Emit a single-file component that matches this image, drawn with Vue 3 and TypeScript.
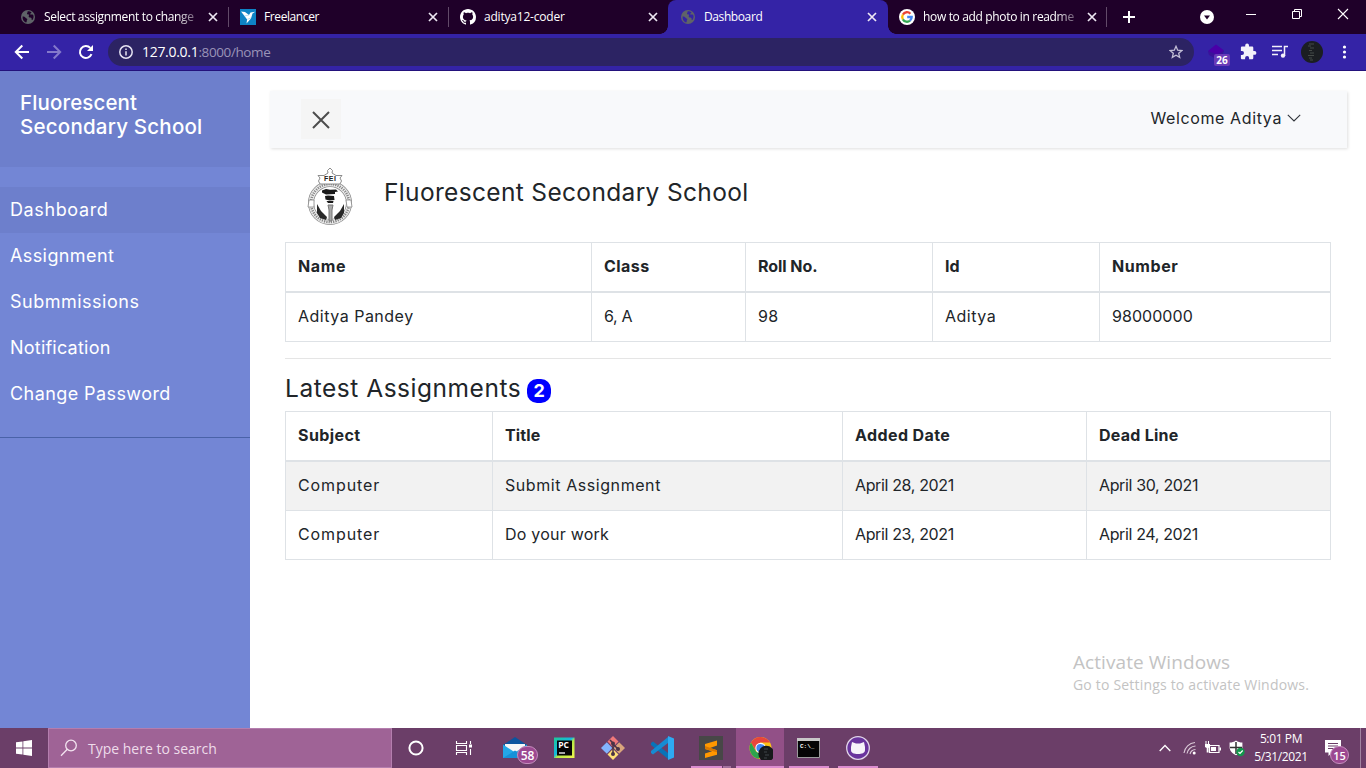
<script setup lang="ts">
interface Tab {
  title: string
  icon: 'globe' | 'bird' | 'github' | 'google'
  active?: boolean
  cls: string
}

const tabs: Tab[] = [
  { title: 'Select assignment to change', icon: 'globe', cls: 't-select' },
  { title: 'Freelancer', icon: 'bird', cls: 't-free' },
  { title: 'aditya12-coder', icon: 'github', cls: 't-git' },
  { title: 'Dashboard', icon: 'globe', active: true, cls: 't-dash' },
  { title: 'how to add photo in readme', icon: 'google', cls: 't-how' },
]

const menu: string[] = ['Dashboard', 'Assignment', 'Submmissions', 'Notification', 'Change Password']

const studentHead: string[] = ['Name', 'Class', 'Roll No.', 'Id', 'Number']
const student: string[] = ['Aditya Pandey', '6, A', '98', 'Aditya', '98000000']

const assignmentHead: string[] = ['Subject', 'Title', 'Added Date', 'Dead Line']
const assignments: string[][] = [
  ['Computer', 'Submit Assignment', 'April 28, 2021', 'April 30, 2021'],
  ['Computer', 'Do your work', 'April 23, 2021', 'April 24, 2021'],
]
</script>

<template>
  <div class="screen">
    <svg class="defs" width="0" height="0">
      <symbol id="cat" viewBox="0 0 16 16">
        <path d="M8 0C3.58 0 0 3.58 0 8c0 3.54 2.29 6.53 5.47 7.59.4.07.55-.17.55-.38 0-.19-.01-.82-.01-1.49-2.01.37-2.53-.49-2.69-.94-.09-.23-.48-.94-.82-1.13-.28-.15-.68-.52-.01-.53.63-.01 1.08.58 1.23.82.72 1.21 1.87.87 2.33.66.07-.52.28-.87.51-1.07-1.78-.2-3.64-.89-3.64-3.95 0-.87.31-1.59.82-2.15-.08-.2-.36-1.02.08-2.12 0 0 .67-.21 2.2.82.64-.18 1.32-.27 2-.27s1.36.09 2 .27c1.53-1.04 2.2-.82 2.2-.82.44 1.1.16 1.92.08 2.12.51.56.82 1.27.82 2.15 0 3.07-1.87 3.75-3.65 3.95.29.25.54.73.54 1.48 0 1.07-.01 1.93-.01 2.2 0 .21.15.46.55.38A8.01 8.01 0 0 0 16 8c0-4.42-3.58-8-8-8z" fill="currentColor" />
      </symbol>
    </svg>

    <header class="tabstrip">
      <div v-for="(t, i) in tabs" :key="i" class="tab" :class="{ active: t.active, sep: i !== 2 && i !== 3 }">
        <svg v-if="t.icon === 'globe'" class="fav" viewBox="0 0 16 16">
          <circle cx="8" cy="8" r="7" fill="#5f6368" />
          <path :fill="t.active ? '#3423a6' : '#1f0029'" d="M2.6 7.6c1.5 0 2.4.4 3 1.2.5.7 1.6.5 1.7 1.4.1.8-.8 1-.6 2 .1.7-.3 1.2-.9 1.3C3.700 12.500 2.300 10.400 2.600 7.600zM7.500 2.400c1.500-.4 3 .1 4 1-.2.700-1 .6-1.300 1.300-.3.8.8 1 1.500.8.9-.2 1.600.3 1.800 1.300.3 1.500-.2 3.300-1.200 4.300-.8-.1-.7-1-.7-1.700 0-.9-1.200-.6-1.900-.9-1-.4-1.300-1.300-.8-2.100.4-.6.3-.9-.4-1-.8 0-1.500-.3-1.500-1 .1-.7.8-.9.5-2z" />
        </svg>
        <svg v-else-if="t.icon === 'bird'" class="fav" viewBox="0 0 16 16">
          <path d="M0 0h16v16H0z" fill="#0e83c5" />
          <path d="M1 2.500l4 .5L9 6l1.500-2.500L15.200 2.800l-2.700 1.700L11 9.500 6.500 14.500l.6-4L4.500 7z" fill="#fff" />
          <path d="M4.500 7l4.500-1M7.300 10.300L11 9" stroke="#8cc7e8" stroke-width=".6" />
        </svg>
        <svg v-else-if="t.icon === 'github'" class="fav white"><use href="#cat" /></svg>
        <svg v-else class="fav" viewBox="0 0 16 16">
          <circle cx="8" cy="8" r="8" fill="#fff" />
          <g fill="none" stroke-width="2.300">
            <path d="M3.900 5.600A4.700 4.700 0 0 1 11.400 4.700" stroke="#ea4335" />
            <path d="M3.900 10.400A4.700 4.700 0 0 1 3.900 5.600" stroke="#fbbc05" />
            <path d="M11 11.600A4.700 4.700 0 0 1 3.900 10.400" stroke="#34a853" />
            <path d="M8.200 8H12.700A4.700 4.700 0 0 1 11 11.600" stroke="#4285f4" />
          </g>
        </svg>
        <span class="tab-title" :class="t.cls">{{ t.title }}</span>
        <svg class="close" viewBox="0 0 10 10"><path d="M1 1l8 8M9 1l-8 8" stroke="#eee8f4" stroke-width="1.700" /></svg>
      </div>
      <svg class="plus" viewBox="0 0 12 12"><path d="M6 0v12M0 6h12" stroke="#fff" stroke-width="2" /></svg>
      <div class="win">
        <svg width="46" height="34" viewBox="0 0 46 34"><circle cx="23" cy="17" r="7" fill="#fff" /><path d="M20 15.500h6l-3 4z" fill="#1f0029" /></svg>
        <svg width="46" height="34" viewBox="0 0 46 34"><path d="M18 14.500h10" stroke="#fff" /></svg>
        <svg width="46" height="34" viewBox="0 0 46 34"><path d="M18.500 11.500h7v7h-7zM20.500 11v-1.500h7v7h-1.500" fill="none" stroke="#fff" /></svg>
        <svg width="46" height="34" viewBox="0 0 46 34"><path d="M18 9l10 10M28 9l-10 10" stroke="#fff" stroke-width="1.100" /></svg>
      </div>
    </header>

    <div class="toolbar">
      <svg class="tool" viewBox="0 0 32 32"><path d="M23 16H10M16.300 9.500L9.800 16l6.500 6.500" fill="none" stroke="#fff" stroke-width="2" /></svg>
      <svg class="tool" viewBox="0 0 32 32"><path d="M9 16h13M15.700 9.500l6.500 6.500-6.500 6.500" fill="none" stroke="#8479cb" stroke-width="2" /></svg>
      <svg class="tool" viewBox="0 0 32 32"><path d="M21.500 18.200A6 6 0 1 1 20.300 11.900" fill="none" stroke="#fff" stroke-width="2" /><path d="M23 9v6h-6z" fill="#fff" /></svg>
      <div class="omnibox">
        <svg class="info" viewBox="0 0 14 14"><circle cx="7" cy="7" r="6.200" fill="none" stroke="#e6e3f2" stroke-width="1.500" /><path d="M7 6.200v4.300M7 3.500v1.500" stroke="#e6e3f2" stroke-width="1.500" /></svg>
        <span class="url">127.0.0.1<span class="path">:8000/home</span></span>
        <svg class="star" viewBox="0 0 14 14"><path d="M7 1.300l1.700 3.900 4.200.3-3.200 2.800 1 4.100L7 10.200l-3.700 2.200 1-4.100L1.100 5.500l4.200-.3z" fill="none" stroke="#c3bfd6" stroke-width="1.300" /></svg>
      </div>
      <div class="tool ext">
        <svg viewBox="0 0 30 32"><path d="M6 15.500L14 9l8 6-2 5-6 3-7-4z" fill="#3a129a" /><path d="M6 15l8-6.500 8 6-7 4z" fill="#4a00a8" /></svg>
        <span class="count">26</span>
      </div>
      <svg class="tool" viewBox="0 0 32 32"><path d="M22.500 15h-1.200v-3.100c0-.8-.6-1.300-1.300-1.300h-3v-1.200a1.900 1.900 0 0 0-3.800 0v1.200h-3c-.8 0-1.300.5-1.300 1.300v3h1.100a2 2 0 0 1 0 4H8.900v3c0 .8.6 1.300 1.300 1.300h2.900v-1.100a2 2 0 0 1 4 0v1.100H20c.7 0 1.300-.5 1.300-1.300v-3.100h1.200a1.900 1.900 0 0 0 0-3.800z" fill="#f3f1fa" /></svg>
      <svg class="tool" viewBox="0 0 32 32"><path d="M8 10.500h10M8 14.500h10M8 18.500h6M20.500 20V10.500h3.500" fill="none" stroke="#f3f1fa" stroke-width="1.500" /><circle cx="19" cy="19.600" r="2.200" fill="#f3f1fa" /></svg>
      <svg class="tool" viewBox="0 0 32 32"><circle cx="16" cy="16" r="11" fill="#1b1e22" /><path d="M13 8h5M12 10h3M14 12h4M13 14.500h3M14 17h4M12 19.500h6M13 22h3M14 24h3" stroke="#454a48" /></svg>
      <svg class="tool" viewBox="0 0 32 32"><g fill="#fff"><circle cx="16.500" cy="11" r="1.600" /><circle cx="16.500" cy="16" r="1.600" /><circle cx="16.500" cy="21" r="1.600" /></g></svg>
    </div>

    <div class="page">
      <nav class="sidebar">
        <h3 class="brand"><span class="b1">Fluorescent</span><br /><span class="b2">Secondary School</span></h3>
        <ul class="menu">
          <li v-for="(m, i) in menu" :key="m" :class="['m' + i, { current: i === 0 }]">{{ m }}</li>
        </ul>
      </nav>
      <main class="content">
        <div class="navbar">
          <span class="toggle"><svg viewBox="0 0 18 18"><path d="M1 1l16 16M17 1L1 17" stroke="#4c4c4c" stroke-width="2" /></svg></span>
          <span class="welcome">Welcome Aditya</span>
          <svg class="chev" viewBox="0 0 14 8"><path d="M.8.8L7 7l6.200-6.200" fill="none" stroke="#30343a" stroke-width="1.100" /></svg>
        </div>
        <div class="body">
          <div class="school">
            <svg class="crest" viewBox="0 0 48 58">
              <circle cx="24" cy="36" r="19" fill="#fff" stroke="#8c8c8c" stroke-width="6" />
              <circle cx="24" cy="36" r="19" fill="none" stroke="#ececec" stroke-width="4.500" />
              <circle cx="24" cy="36" r="19" fill="none" stroke="#858585" stroke-width="2.600" stroke-dasharray="1.200 1.100" />
              <path d="M24 1l2.500 2.500-.5 2.500 4 2.500h6l-2 2.500 1.500 3-1.500 3H14l-1.500-3 1.500-3-2-2.500h6l4-2.500-.5-2.500z" fill="#fff" stroke="#808080" stroke-width=".9" />
              <path d="M3 33h5v7H2zM40 33h5l1 7h-5z" fill="#fff" stroke="#888" stroke-width=".8" />
              <text x="24.200" y="14" text-anchor="middle" class="fei">FEI</text>
              <path d="M16 23.500l4-1.500 4 .7 6-.2 2 2-3 .6 0 2-9 .4-4-2zM19 29l3-.5 6 .5.500 4-5 .5-4-1zM20.500 34l7 0-.5 2h-5z" fill="#191919" />
              <path d="M22 38h5l-1 5v11h-3V43z" fill="#aaa" stroke="#777" stroke-width="1" />
              <path d="M11 37l4 7 6 6-1 3-6-2-3-5zM38 37l-4 7-6 6 1 3 6-2 3-5z" fill="#282828" />
            </svg>
            <h4 class="school-name">Fluorescent Secondary School</h4>
          </div>
          <table class="grid student">
            <colgroup><col class="c306" /><col class="c154" /><col class="c187" /><col class="c167" /><col class="c231" /></colgroup>
            <thead><tr><th v-for="h in studentHead" :key="h">{{ h }}</th></tr></thead>
            <tbody><tr><td v-for="s in student" :key="s">{{ s }}</td></tr></tbody>
          </table>
          <hr class="rule" />
          <h4 class="latest"><span class="latest-text">Latest Assignments</span><span class="badge">2</span></h4>
          <table class="grid striped">
            <colgroup><col class="c207" /><col class="c350" /><col class="c244" /><col class="c244" /></colgroup>
            <thead><tr><th v-for="h in assignmentHead" :key="h">{{ h }}</th></tr></thead>
            <tbody>
              <tr v-for="(row, r) in assignments" :key="r"><td v-for="(cell, c) in row" :key="c">{{ cell }}</td></tr>
            </tbody>
          </table>
        </div>
      </main>
      <div class="activate">
        <div class="a1">Activate Windows</div>
        <div class="a2">Go to Settings to activate Windows.</div>
      </div>
    </div>

    <footer class="taskbar">
      <div class="start"><svg width="16" height="16" viewBox="0 0 16 16"><path d="M0 2.300L6.500 1.400v6.100H0zM7.300 1.300L16 0v7.500H7.300zM0 8.400h6.500v6.200L0 13.700zM7.300 8.400H16V16l-8.700-1.300z" fill="#fff" /></svg></div>
      <div class="search">
        <svg width="18" height="18" viewBox="0 0 18 18"><circle cx="11" cy="6.500" r="5.300" fill="none" stroke="#f3e4f0" stroke-width="1.300" /><path d="M7.300 10.300L1 16.700" stroke="#f3e4f0" stroke-width="1.300" /></svg>
        <span>Type here to search</span>
      </div>
      <div class="app narrow"><svg viewBox="0 0 24 24"><circle cx="12" cy="12" r="6.600" fill="none" stroke="#fff" stroke-width="2" /></svg></div>
      <div class="app narrow gap"><svg viewBox="0 0 24 24"><path d="M4.500 5v2.500h10V5M4.500 19v-2.500h10V19M4.500 9.500h10v5h-10zM18.500 5v3M18.500 13v6" fill="none" stroke="#fff" stroke-width="1.100" /><path d="M17 8.500h3v3h-3z" fill="#fff" /></svg></div>
      <div class="app">
        <svg viewBox="0 0 24 24"><path d="M0 9L12 1l12 8v3H0z" fill="#0b559f" /><path d="M2 8h20v9H2z" fill="#f6f6f6" /><path d="M0 8.500l12 8 12-8V22H0z" fill="#23a7e8" /><path d="M0 22l12-7.500L24 22z" fill="#1691d8" /></svg>
        <span class="bubble mailcount">58</span>
      </div>
      <div class="app"><svg viewBox="0 0 24 24"><defs><linearGradient id="pcg" x2="1" y2="1"><stop offset="0" stop-color="#20c997" /><stop offset=".45" stop-color="#12b9e0" /><stop offset=".55" stop-color="#b6ea45" /><stop offset="1" stop-color="#eff64c" /></linearGradient></defs><path d="M2 1.500h20.500V22H2z" fill="url(#pcg)" /><path d="M5 4.500h15v15H5z" fill="#050505" /><path d="M7 17h6" stroke="#fff" stroke-width="1.300" /><text x="6.200" y="12.200" class="pc">PC</text></svg></div>
      <div class="app"><svg viewBox="0 0 24 24"><g><path d="M12 0l5.500 5.500L12 11 6.500 5.500z" fill="#f0787a" /><path d="M5.800 6.300L11.300 12l-5.500 5.700L0 12z" fill="#83b5ff" /><path d="M18.200 6.300L24 12l-5.800 5.700L12.700 12z" fill="#d9a57c" /><path d="M12 13l5.500 5.500L12 24l-5.500-5.500z" fill="#ffdf76" /></g><path d="M9 4l3 3v12M12 8l5 5" fill="none" stroke="#493346" stroke-width="1.500" /><g fill="#493346"><circle cx="12" cy="7.500" r="2" /><circle cx="17" cy="13" r="2" /><circle cx="12" cy="18" r="2" /></g></svg></div>
      <div class="app"><svg viewBox="0 0 24 24"><path d="M1 7l2-1.500L18 17v6L1 9z" fill="#0873b8" /><path d="M1 17l2 1.500L18 7V1L1 15z" fill="#168bd2" /><path d="M18 0l6 2.500v19L18 24z" fill="#2eaaf2" /></svg></div>
      <div class="app"><svg viewBox="0 0 24 24"><path d="M0 0h24v24H0z" fill="#474747" /><path d="M18 4.500v5L11 12l7 2.200v4.500L6 22v-4.500l7-2.200L6 13V8z" fill="#ff9800" /><path d="M6 10l12 4.200v2L6 13z" fill="#d97800" /></svg><i class="line sub" /></div>
      <div class="app lit">
        <svg viewBox="0 0 24 24"><circle cx="11.500" cy="12" r="11" fill="#fbc116" /><path d="M2 6.500A11 11 0 0 1 21 6.500H11.500L7 15z" fill="#e8453c" /><path d="M2 6.500l5 9 5 2.500-2.500 4.800A11 11 0 0 1 2 6.500z" fill="#2da44e" /><circle cx="11.500" cy="12" r="5.200" fill="#fff" /><circle cx="11.500" cy="12" r="4.100" fill="#4285f4" /><circle cx="17.300" cy="17.800" r="8" fill="#17191b" /><path d="M15 13h4M15 16h3M16 19h4M15 22h3" stroke="#41464a" /></svg><i class="line full" />
      </div>
      <div class="app"><svg viewBox="0 0 24 24"><path d="M.5 2.500h22v19H.5z" fill="#050505" stroke="#9b9b9b" /><path d="M0 2h23v3H0z" fill="#c8c8c8" /><text x="3" y="11.500" class="cmd">C:\_</text></svg><i class="line" /></div>
      <div class="app"><svg viewBox="0 0 24 24"><circle cx="12" cy="12" r="11.300" fill="#69349d" stroke="#e1d5ea" stroke-width="1.300" /><path d="M6 6l4 1.500h4L18 6l1 5v3c0 3-3 4-7 4s-7-1-7-4v-3z" fill="#f6f3fa" /></svg><i class="line" /></div>
      <div class="tray">
        <svg class="t-up" viewBox="0 0 12 8"><path d="M.7 7L6 1.500 11.300 7" fill="none" stroke="#fff" stroke-width="1.300" /></svg>
        <svg class="t-wifi" viewBox="0 0 14 14"><g fill="none" stroke="#dccbd9" stroke-width="1.100"><path d="M1 12A12 12 0 0 1 12 1.500M4 12.500A9 9 0 0 1 12.500 5M7 13A6 6 0 0 1 12.500 8.500" /></g><circle cx="11.200" cy="12" r="1.500" fill="#fff" /></svg>
        <svg class="t-bat" viewBox="0 0 17 14"><path d="M5.500 4.500h9.500v7H5.500z" fill="none" stroke="#fff" stroke-width="1.200" /><path d="M7 6h5v4H7zM15.500 6.500H17v3h-1.500zM1 3h5v3L4.500 7v4.500H2.700V7L1 6zM1.500 0h1v3h-1zM4 0h1v3H4z" fill="#fff" /></svg>
        <svg class="t-shield" viewBox="0 0 16 17"><path d="M7 .5C5 2 3 2.500.6 2.500V7c0 4 3 6.500 6.400 8.300C10.500 13.500 13.400 11 13.400 7V2.500C11 2.500 9 2 7 .5z" fill="#fff" /><path d="M7 2v12M1 7.500h12" stroke="#333" stroke-width="1.500" /><circle cx="11.500" cy="12" r="4.200" fill="#11974b" /><path d="M9.500 12l1.500 1.500 2.700-3" fill="none" stroke="#fff" stroke-width="1.200" /></svg>
        <div class="clock"><span>5:01 PM</span><span>5/31/2021</span></div>
        <div class="note">
          <svg viewBox="0 0 16 16"><path d="M0 0h16v12.500H7L3.500 16v-3.500H0z" fill="#fff" /><path d="M3 3.500h10M3 6h10M3 8.500h7" stroke="#6b3e68" /></svg>
          <span class="bubble notecount">15</span>
        </div>
      </div>
    </footer>
  </div>
</template>

<style>
html, body { margin: 0; overflow: hidden; }
</style>

<style scoped>
* { box-sizing: border-box; }
.screen { width: 1366px; height: 768px; display: flex; flex-direction: column; overflow: hidden; font-family: "Open Sans", "Noto Sans", sans-serif; background: #fff; }
.defs { position: absolute; }
svg { display: block; flex: none; }

.tabstrip { height: 34px; background: #1f0029; display: flex; align-items: center; padding-left: 8px; flex: none; }
.tab { width: 220px; height: 34px; display: flex; align-items: center; padding: 0 10px 0 12px; position: relative; color: #fff; font-size: 12px; flex: none; }
.tab:nth-child(5) { width: 218px; padding: 0 9px 0 11px; }
.tab.sep::after { content: ""; position: absolute; right: -1px; top: 7px; width: 1px; height: 20px; background: #624a69; }
.tab.active { background: #3423a6; border-radius: 8px 8px 0 0; }
.tab.active::before, .tab.active::after { content: ""; position: absolute; bottom: 0; width: 8px; height: 8px; }
.tab.active::before { left: -8px; background: radial-gradient(circle at 0 0, #1f0029 7.500px, #3423a6 8px); }
.tab.active::after { right: -8px; background: radial-gradient(circle at 100% 0, #1f0029 7.500px, #3423a6 8px); }
.fav { width: 16px; height: 16px; margin-right: 8px; }
.white { color: #fff; }
.tab-title { white-space: nowrap; line-height: 20px; }
.t-select, .t-how { -webkit-mask-image: linear-gradient(90deg, #000 132px, transparent 162px); mask-image: linear-gradient(90deg, #000 132px, transparent 162px); }
.t-select { letter-spacing: -.34px; }
.t-free { letter-spacing: -.4px; }
.t-git { letter-spacing: -.2px; }
.t-dash { letter-spacing: -.4px; }
.t-how { letter-spacing: -.34px; }
.close { width: 10px; height: 10px; margin-left: auto; }
.tab.active .close { margin-right: 1px; }
.plus { width: 12px; height: 12px; margin-left: 17px; }
.win { margin-left: auto; display: flex; }
.win svg:first-child { margin-right: -2px; }

.toolbar { height: 37px; background: #3423a6; border-bottom: 1px solid #23127c; display: flex; align-items: center; padding: 0 6px; flex: none; }
.tool { width: 32px; height: 32px; flex: none; }
.omnibox { flex: 1; height: 28px; border-radius: 14px; background: #2c2363; margin: 0 8px 0 6px; display: flex; align-items: center; padding: 0 11px; }
.info { width: 14px; height: 14px; margin-right: 9px; }
.url { color: #fff; font-size: 14px; letter-spacing: -.3px; line-height: 20px; }
.path { color: #9a93b8; font-size: 13.500px; letter-spacing: -.38px; }
.star { width: 14px; height: 14px; margin-left: auto; }
.ext { position: relative; width: 30px; }
.ext svg { width: 30px; height: 32px; }
.count { position: absolute; left: 12px; top: 18px; width: 16px; height: 12px; border-radius: 2px; background: #6a3bb8; color: #fff; font-size: 10px; line-height: 12px; font-weight: 700; text-align: center; }

.page { height: 657px; display: flex; position: relative; font-family: Inter, "Open Sans", sans-serif; }
.sidebar { width: 250px; background: #7386d5; color: #fff; flex: none; }
.brand { margin: 0; height: 96px; padding: 20px; background: #6d7fcc; font-size: 20.500px; font-weight: 500; line-height: 24px; white-space: nowrap; }
.b1 { letter-spacing: .13px; }
.b2 { letter-spacing: .22px; }
.menu { list-style: none; margin: 0; padding: 20px 0; border-bottom: 1px solid #4a62a8; }
.menu li { height: 46px; padding: 0 10px; font-size: 18px; line-height: 46px; white-space: nowrap; }
.m0 { letter-spacing: .62px; }
.m1 { letter-spacing: .4px; }
.m2 { letter-spacing: .5px; }
.m3 { letter-spacing: .22px; }
.m4 { letter-spacing: .42px; }
.current { background: #6d7fcc; }

.content { flex: 1; padding: 20px 19px 0 20px; }
.navbar { height: 57px; background: #f8f9fb; box-shadow: 1px 1px 3px rgba(0, 0, 0, .13); display: flex; align-items: flex-start; padding: 8px 46px 0 31px; }
.toggle { width: 40px; height: 40px; background: #f5f5f5; display: flex; align-items: center; justify-content: center; }
.toggle svg { width: 18px; height: 18px; margin-top: 1px; }
.welcome { margin: 7px 0 0 auto; font-size: 16px; letter-spacing: .62px; color: #212529; line-height: 24px; }
.chev { width: 14px; height: 8px; margin: 15px 0 0 5px; }
.body { padding: 19px 16px 0 15px; color: #212529; }
.school { height: 75px; display: flex; padding-left: 21px; }
.crest { width: 48px; height: 58px; }
.fei { font: 700 7px "Liberation Sans", sans-serif; fill: #222; letter-spacing: .5px; }
.school-name { margin: 11px 0 0 30px; font-size: 24.500px; line-height: 29px; font-weight: 400; letter-spacing: .34px; white-space: nowrap; }
.grid { width: 1046px; table-layout: fixed; border-collapse: collapse; font-size: 16px; line-height: 24px; }
.grid th, .grid td { border: 1px solid #dee2e6; padding: 11px 12px 13px; text-align: left; white-space: nowrap; }
.grid th { border-bottom-width: 2px; font-weight: 700; }
.grid td { font-weight: 400; }
.student th:nth-child(1) { letter-spacing: .65px; }
.student th:nth-child(2) { letter-spacing: .45px; }
.student th:nth-child(3) { letter-spacing: -.05px; }
.student th:nth-child(4) { letter-spacing: .1px; }
.student th:nth-child(5) { letter-spacing: .6px; }
.student td:nth-child(1) { letter-spacing: .5px; }
.student td:nth-child(2) { letter-spacing: -.3px; }
.student td:nth-child(3) { letter-spacing: .3px; }
.student td:nth-child(4) { letter-spacing: .5px; }
.student td:nth-child(5) { letter-spacing: .05px; }
.striped th:nth-child(1) { letter-spacing: .4px; }
.striped th:nth-child(2) { letter-spacing: .15px; }
.striped th:nth-child(3) { letter-spacing: .4px; }
.striped th:nth-child(4) { letter-spacing: .25px; }
.striped td:nth-child(1) { letter-spacing: .9px; }
.striped td:nth-child(2) { letter-spacing: .57px; }
.striped tr:last-child td:nth-child(2) { letter-spacing: .22px; }
.striped td:nth-child(3), .striped td:nth-child(4) { letter-spacing: -.36px; }
.striped tbody tr:first-child { background: #f2f2f2; }
.c306 { width: 306px; } .c154 { width: 154px; } .c187 { width: 187px; } .c167 { width: 167px; } .c231 { width: 231px; }
.c207 { width: 207px; } .c350 { width: 350px; } .c244 { width: 244px; }
.rule { border: 0; height: 1px; background: #e5e5e5; margin: 16px 0; }
.latest { margin: 0 0 8px; font-size: 24.500px; line-height: 29px; height: 28px; font-weight: 400; display: flex; align-items: center; }
.latest-text { letter-spacing: .53px; margin-top: -2px; }
.badge { width: 24px; height: 24px; margin: 4px 0 0 6px; border-radius: 10px; background: #00f; color: #fff; font-size: 18px; line-height: 24px; font-weight: 700; text-align: center; }
.activate { position: absolute; left: 1073px; top: 578px; color: #c3c3c3; font-family: "Open Sans", sans-serif; white-space: nowrap; }
.a1 { font-size: 19px; line-height: 26px; letter-spacing: .07px; }
.a2 { font-size: 14px; line-height: 20px; letter-spacing: .19px; }

.taskbar { height: 40px; background: #6b3e68; display: flex; color: #fff; flex: none; }
.start { width: 48px; display: flex; align-items: center; justify-content: center; }
.search { width: 344px; border: 1px solid #b47eae; background: #9f6396; display: flex; align-items: center; padding-left: 11px; font-size: 14px; color: #eedcea; }
.search span { margin-left: 10px; }
.app { width: 49px; height: 40px; display: flex; align-items: center; justify-content: center; position: relative; padding-right: 2px; }
.app svg { width: 24px; height: 24px; }
.app.narrow { width: 48px; padding-right: 0; }
.gap { margin-right: 3px; }
.lit { background: linear-gradient(90deg, #925087 48px, transparent 48px); padding-right: 0; }
.line { position: absolute; left: 4px; right: 5px; bottom: 0; height: 2px; background: #db8ccf; }
.line.full { left: 0; right: 1px; }
.line.sub { background: linear-gradient(90deg, #db8ccf 31px, #6b3e68 31px, #6b3e68 32px, #a4719e 32px); }
.pc { font: 700 8.500px "Open Sans", sans-serif; fill: #fff; }
.cmd { font: 700 6px "Liberation Mono", monospace; fill: #fff; }
.bubble { position: absolute; display: flex; align-items: center; justify-content: center; background: #9c4891; border: 1px solid #c58dbd; border-radius: 10px; font-size: 12px; font-weight: 600; color: #fff; }
.mailcount { left: 26px; top: 18px; width: 21px; height: 18px; }
.tray { margin-left: auto; display: flex; align-items: center; width: 207px; position: relative; }
.t-up { width: 12px; height: 8px; }
.t-wifi { width: 14px; height: 14px; margin-left: 12px; }
.t-bat { width: 17px; height: 14px; margin-left: 7px; }
.t-shield { width: 16px; height: 17px; margin-left: 8px; }
.clock { width: 54px; margin-left: 9px; display: flex; flex-direction: column; align-items: center; font-size: 12px; line-height: 18px; letter-spacing: -.38px; white-space: nowrap; }
.note { margin-left: 17px; width: 36px; height: 40px; border-right: 1px solid #a183a0; position: relative; padding-top: 12px; }
.note svg { width: 16px; height: 16px; }
.notecount { left: 5px; top: 18px; width: 19px; height: 18px; font-size: 11px; }
</style>
